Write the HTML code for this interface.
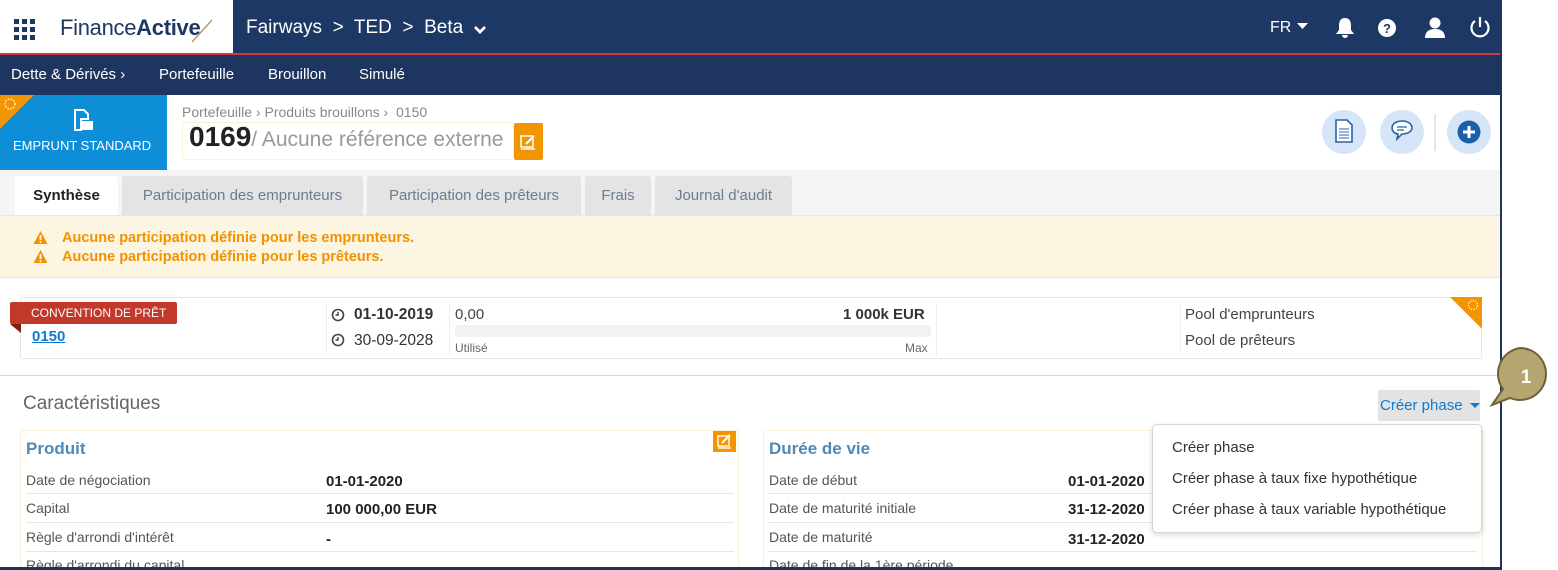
<!DOCTYPE html>
<html><head><meta charset="utf-8"><style>
*{box-sizing:border-box;margin:0;padding:0}
body{width:1558px;height:570px;overflow:hidden;background:#fff;font-family:"Liberation Sans",sans-serif;position:relative;color:#333}
.a{position:absolute;white-space:nowrap}
#frame{position:absolute;left:0;top:0;width:1502px;height:570px;border-right:2px solid #1e3560;overflow:hidden;background:#fff}
.lbl{font-size:14px;color:#555}
.val{font-size:15px;font-weight:bold;color:#222;margin-top:2px}
.sep{position:absolute;height:1px;background:#e6e6e6}
.tab{position:absolute;top:176px;height:39px;background:#e4e4e4;border-radius:3px 3px 0 0;color:#6b7c93;font-size:15px;text-align:center;line-height:39px}
</style></head><body>
<div id="frame">
 <div class="a" style="left:0;top:0;width:1500px;height:53px;background:#1e3865"></div>
 <div class="a" style="left:0;top:0;width:233px;height:53px;background:#fff"></div>
 <div class="a" style="left:0;top:53px;width:1500px;height:2px;background:#d2393f"></div>
 <div class="a" style="left:0;top:55px;width:1500px;height:40px;background:#1e3560"></div>
 <svg class="a" style="left:14px;top:19px" width="21" height="21"><g fill="#1e3865"><rect x="0" y="0" width="5" height="5"/><rect x="8" y="0" width="5" height="5"/><rect x="16" y="0" width="5" height="5"/><rect x="0" y="8" width="5" height="5"/><rect x="8" y="8" width="5" height="5"/><rect x="16" y="8" width="5" height="5"/><rect x="0" y="16" width="5" height="5"/><rect x="8" y="16" width="5" height="5"/><rect x="16" y="16" width="5" height="5"/></g></svg>
 <div class="a" style="left:60px;top:15px;font-size:22px;color:#1e3865;letter-spacing:-0.3px">Finance<b style="font-weight:600">Active</b></div>
 <svg class="a" style="left:190px;top:18px" width="24" height="26"><line x1="2" y1="24" x2="22" y2="2" stroke="#b49a6a" stroke-width="1.5"/></svg>
 <div class="a" style="left:246px;top:17px;font-size:19px;color:#fff">Fairways &nbsp;&gt;&nbsp; TED &nbsp;&gt;&nbsp; Beta</div>
 <svg class="a" style="left:473px;top:25px" width="14" height="10"><path d="M2 2 L7 7 L12 2" stroke="#fff" stroke-width="2.8" fill="none"/></svg>
 <div class="a" style="left:1270px;top:19px;font-size:16px;color:#fff">FR</div>
 <svg class="a" style="left:1297px;top:23px" width="11" height="6"><path d="M0 0 H11 L5.5 6Z" fill="#fff"/></svg>
 <svg class="a" style="left:1335px;top:17px" width="20" height="21"><path d="M10 1 C5 1 4 5 4 9 V13 L1 17 H19 L16 13 V9 C16 5 15 1 10 1Z M7 18 A3 3 0 0 0 13 18Z" fill="#fff"/></svg>
 <svg class="a" style="left:1378px;top:19px" width="18" height="18"><circle cx="9" cy="9" r="9" fill="#fff"/><text x="9" y="14" font-size="13" font-weight="bold" text-anchor="middle" fill="#1e3865" font-family="Liberation Sans">?</text></svg>
 <svg class="a" style="left:1424px;top:17px" width="22" height="21"><circle cx="11" cy="6" r="5.5" fill="#fff"/><path d="M1 21 C1 14 6 12 11 12 C16 12 21 14 21 21Z" fill="#fff"/></svg>
 <svg class="a" style="left:1469px;top:16px" width="22" height="22"><path d="M6 5 A8.5 8.5 0 1 0 16 5" stroke="#fff" stroke-width="2.2" fill="none"/><line x1="11" y1="1" x2="11" y2="11" stroke="#fff" stroke-width="2.2"/></svg>
 <div class="a" style="left:11px;top:66px;font-size:15px;color:#fff">Dette &amp; Dérivés ›</div>
 <div class="a" style="left:159px;top:66px;font-size:15px;color:#fff">Portefeuille</div>
 <div class="a" style="left:268px;top:66px;font-size:15px;color:#fff">Brouillon</div>
 <div class="a" style="left:359px;top:66px;font-size:15px;color:#fff">Simulé</div>
 <div class="a" style="left:0;top:95px;width:167px;height:75px;background:#0f8ed8"></div>
 <svg class="a" style="left:0;top:95px" width="34" height="34"><path d="M0 0H34L0 34Z" fill="#f39500"/><circle cx="10" cy="9" r="5" stroke="#fff" stroke-width="1.3" stroke-dasharray="1.5 1.5" fill="none"/></svg>
 <svg class="a" style="left:72px;top:109px" width="22" height="24"><path d="M3 1H12L16 5V10H9V21H3Z" fill="none" stroke="#fff" stroke-width="2"/><rect x="9" y="12" width="12" height="9" fill="#fff"/></svg>
 <div class="a" style="left:13px;top:138px;font-size:13px;color:#fff">EMPRUNT STANDARD</div>
 <div class="a" style="left:182px;top:104px;font-size:14px;color:#888">Portefeuille › Produits brouillons › &nbsp;0150</div>
 <div class="a" style="left:182px;top:122px;width:332px;height:38px;border:1px solid #fbefd9;border-radius:3px"></div>
 <div class="a" style="left:189px;top:121px;font-size:28px;font-weight:bold;color:#222">0169<span style="font-weight:normal;font-size:21px;color:#999">/ Aucune référence externe</span></div>
 <div class="a" style="left:514px;top:123px;width:29px;height:37px;background:#f39500;border-radius:2px"></div>
 <svg class="a" style="left:520px;top:134px" width="17" height="16"><rect x="1" y="2" width="12" height="11" stroke="#fff" stroke-width="1.5" fill="none"/><path d="M6 10L14 2" stroke="#fff" stroke-width="2"/><line x1="1" y1="15" x2="15" y2="15" stroke="#fff" stroke-width="1.5"/></svg>
 <div class="a" style="left:1322px;top:110px;width:44px;height:44px;border-radius:50%;background:#d6e6f8"></div>
 <svg class="a" style="left:1334px;top:118px" width="20" height="26"><path d="M2 2H13L18 7V24H2Z" fill="#fff" stroke="#2a62a8" stroke-width="1.6"/><path d="M5 11H15M5 14H15M5 17H15M5 20H15" stroke="#2a62a8" stroke-width="1"/></svg>
 <div class="a" style="left:1380px;top:110px;width:44px;height:44px;border-radius:50%;background:#d6e6f8"></div>
 <svg class="a" style="left:1390px;top:119px" width="24" height="24"><path d="M12 2C6 2 2 5 2 9C2 12 5 15 8 15L7 20L12 15C18 15 22 12 22 9C22 5 18 2 12 2Z" fill="#fff" stroke="#2a62a8" stroke-width="1.6"/><path d="M7 8H17M7 11H14" stroke="#2a62a8" stroke-width="1.2"/></svg>
 <div class="a" style="left:1434px;top:114px;width:2px;height:37px;background:#dde7f1"></div>
 <div class="a" style="left:1447px;top:110px;width:44px;height:44px;border-radius:50%;background:#d6e6f8"></div>
 <svg class="a" style="left:1457px;top:120px" width="24" height="24"><circle cx="12" cy="12" r="11.5" fill="#1d5fa8"/><path d="M12 6V18M6 12H18" stroke="#fff" stroke-width="3"/></svg>
 <div class="a" style="left:0;top:170px;width:1500px;height:108px;background:#f5f5f5"></div>
 <div class="tab" style="left:15px;width:103px;background:#fff;color:#222;font-weight:bold">Synthèse</div>
 <div class="tab" style="left:122px;width:241px">Participation des emprunteurs</div>
 <div class="tab" style="left:367px;width:214px">Participation des prêteurs</div>
 <div class="tab" style="left:585px;width:66px">Frais</div>
 <div class="tab" style="left:655px;width:137px">Journal d'audit</div>
 <div class="a" style="left:0;top:215px;width:1500px;height:63px;background:#fcf5e1;border-top:1px solid #f6e6bf;border-bottom:1px solid #f3e7c8"></div>
 <svg class="a" style="left:33px;top:230px" width="15" height="34"><path d="M7.5 1L14.5 14H0.5Z M7.5 20L14.5 33H0.5Z" fill="#f39200"/><path d="M7.5 5V10M7.5 24V29" stroke="#fff" stroke-width="1.8"/><circle cx="7.5" cy="12" r="1" fill="#fff"/><circle cx="7.5" cy="31" r="1" fill="#fff"/></svg>
 <div class="a" style="left:62px;top:229px;font-size:14.5px;font-weight:bold;color:#f39200;line-height:19px">Aucune participation définie pour les emprunteurs.<br>Aucune participation définie pour les prêteurs.</div>
 <div class="a" style="left:20px;top:297px;width:1462px;height:62px;border:1px solid #e5e5e5;border-radius:3px;background:#fff"></div>
 <svg class="a" style="left:1450px;top:297px" width="32" height="32"><path d="M0 0H32V32Z" fill="#f39500"/><circle cx="23" cy="8" r="4.5" stroke="#fff" stroke-width="1.2" stroke-dasharray="1.3 1.3" fill="none"/></svg>
 <div class="a" style="left:10px;top:302px;width:167px;height:22px;background:#c0392b;border-radius:2px;color:#fff;font-size:12px;line-height:22px;padding-left:21px">CONVENTION DE PRÊT</div>
 <svg class="a" style="left:10px;top:324px" width="11" height="9"><path d="M0 0H11V9Z" fill="#7d1f16"/></svg>
 <div class="a" style="left:32px;top:328px;font-size:15px;font-weight:bold;color:#0f7ad1;text-decoration:underline">0150</div>
 <div class="a" style="left:326px;top:304px;width:1px;height:48px;background:#eee"></div>
 <svg class="a" style="left:331px;top:308px" width="14" height="40"><circle cx="7" cy="7" r="5.5" stroke="#444" stroke-width="1.6" fill="none"/><path d="M7 4V7H4.5" stroke="#444" stroke-width="1.4" fill="none"/><circle cx="7" cy="32" r="5.5" stroke="#444" stroke-width="1.6" fill="none"/><path d="M7 29V32H4.5" stroke="#444" stroke-width="1.4" fill="none"/></svg>
 <div class="a" style="left:354px;top:302px;font-size:15.5px;color:#333;line-height:26px"><b>01-10-2019</b><br>30-09-2028</div>
 <div class="a" style="left:449px;top:304px;width:1px;height:52px;background:#eee"></div>
 <div class="a" style="left:455px;top:306px;font-size:15px;color:#444">0,00</div>
 <div class="a" style="left:843px;top:306px;font-size:15px;font-weight:bold;color:#333">1 000k EUR</div>
 <div class="a" style="left:455px;top:325px;width:476px;height:12px;background:#f2f2f2;border-radius:3px"></div>
 <div class="a" style="left:455px;top:341px;font-size:12px;color:#666">Utilisé</div>
 <div class="a" style="left:905px;top:341px;font-size:12px;color:#666">Max</div>
 <div class="a" style="left:936px;top:304px;width:1px;height:52px;background:#eee"></div>
 <div class="a" style="left:1180px;top:304px;width:1px;height:48px;background:#eee"></div>
 <div class="a" style="left:1185px;top:302px;font-size:15px;color:#444;line-height:26px">Pool d'emprunteurs<br>Pool de prêteurs</div>
 <div class="a" style="left:0;top:375px;width:1500px;height:1px;background:#d8d8d8"></div>
 <div class="a" style="left:23px;top:393px;font-size:19px;color:#666">Caractéristiques</div>
 <div class="a" style="left:1378px;top:390px;width:102px;height:31px;background:#e3e3e3;border-radius:2px"></div>
 <div class="a" style="left:1380px;top:397px;font-size:15px;color:#0f7ad1">Créer phase</div>
 <svg class="a" style="left:1470px;top:403px" width="10" height="6"><path d="M0 0H10L5 5Z" fill="#0f7ad1"/></svg>
 <div class="a" style="left:20px;top:430px;width:719px;height:150px;border:1px solid #fbeedd"></div>
 <div class="a" style="left:763px;top:430px;width:720px;height:150px;border:1px solid #fbeedd"></div>
 <div class="a" style="left:713px;top:431px;width:23px;height:21px;background:#f39500"></div>
 <svg class="a" style="left:717px;top:434px" width="16" height="15"><rect x="1" y="2" width="11" height="10" stroke="#fff" stroke-width="1.4" fill="none"/><path d="M5 9L13 1" stroke="#fff" stroke-width="2"/><line x1="1" y1="14" x2="14" y2="14" stroke="#fff" stroke-width="1.4"/></svg>
 <div class="a" style="left:26px;top:439px;font-size:17px;font-weight:bold;color:#5089b6">Produit</div>
 <div class="a" style="left:769px;top:439px;font-size:17px;font-weight:bold;color:#5089b6">Durée de vie</div>
 <div class="a lbl" style="left:26px;top:472px">Date de négociation</div><div class="a val" style="left:326px;top:471px">01-01-2020</div>
 <div class="sep" style="left:26px;top:493px;width:708px"></div>
 <div class="a lbl" style="left:26px;top:500px">Capital</div><div class="a val" style="left:326px;top:499px">100 000,00 EUR</div>
 <div class="sep" style="left:26px;top:522px;width:708px"></div>
 <div class="a lbl" style="left:26px;top:529px">Règle d'arrondi d'intérêt</div><div class="a val" style="left:326px;top:529px">-</div>
 <div class="sep" style="left:26px;top:551px;width:708px"></div>
 <div class="a lbl" style="left:26px;top:557px">Règle d'arrondi du capital</div><div class="a val" style="left:326px;top:558px">-</div>
 <div class="a lbl" style="left:769px;top:472px">Date de début</div><div class="a val" style="left:1068px;top:471px">01-01-2020</div>
 <div class="sep" style="left:769px;top:493px;width:708px"></div>
 <div class="a lbl" style="left:769px;top:500px">Date de maturité initiale</div><div class="a val" style="left:1068px;top:499px">31-12-2020</div>
 <div class="sep" style="left:769px;top:522px;width:708px"></div>
 <div class="a lbl" style="left:769px;top:529px">Date de maturité</div><div class="a val" style="left:1068px;top:529px">31-12-2020</div>
 <div class="sep" style="left:769px;top:551px;width:708px"></div>
 <div class="a lbl" style="left:769px;top:557px">Date de fin de la 1ère période</div><div class="a val" style="left:1068px;top:558px">-</div>
 <div class="a" style="left:1152px;top:424px;width:330px;height:109px;background:#fff;border:1px solid #d5d5d5;border-radius:5px;box-shadow:0 2px 6px rgba(0,0,0,.15)"></div>
 <div class="a" style="left:1172px;top:432px;font-size:15px;color:#333;line-height:31px">Créer phase<br>Créer phase à taux fixe hypothétique<br>Créer phase à taux variable hypothétique</div>
 <div class="a" style="left:0;top:567px;width:1500px;height:3px;background:#1e3560"></div>
</div>
<svg class="a" style="left:1488px;top:344px" width="70" height="66"><path d="M32 4 A26 26 0 1 1 22 54 L4 61 L15 45 A26 26 0 0 1 32 4Z" fill="#b5a571" stroke="#6e6136" stroke-width="2"/><text x="38" y="39" font-size="19" font-weight="bold" fill="#fff" text-anchor="middle" font-family="Liberation Sans">1</text></svg>
</body></html>
